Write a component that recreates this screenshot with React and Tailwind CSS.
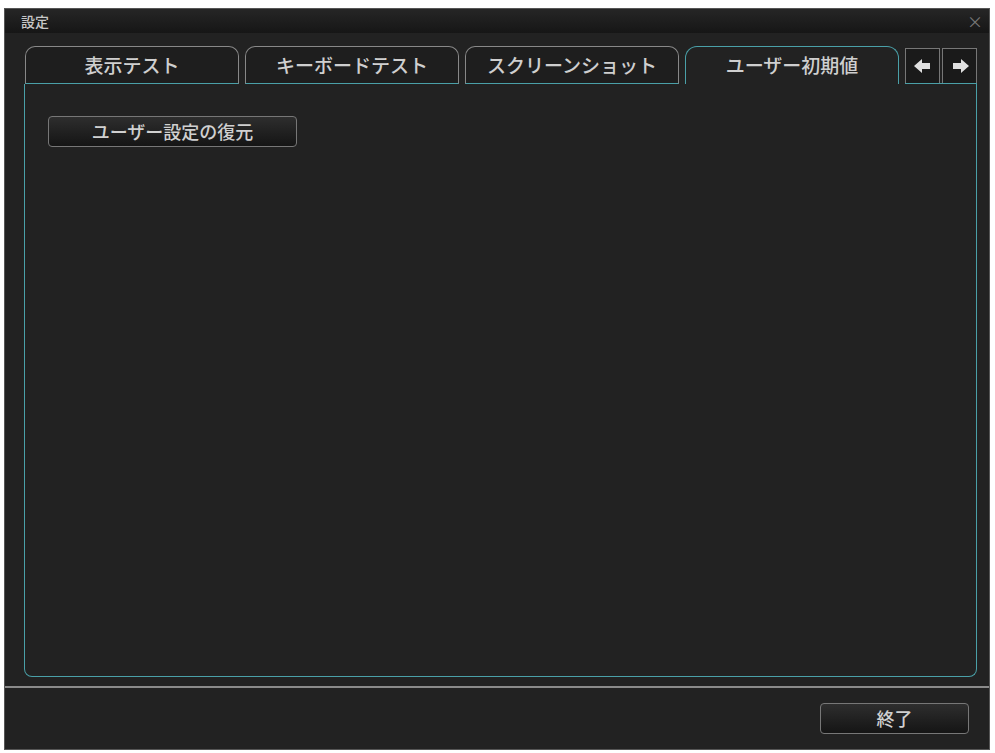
export default function App() {
  const f = { fontFamily: '"Noto Sans CJK JP","Noto Sans",sans-serif' };
  const tabs = ["表示テスト", "キーボードテスト", "スクリーンショット"];
  return (
    <div className="w-[995px] h-[753px] bg-white pt-[8px] px-[4px] pb-[3px]" style={f}>
      <div className="w-[986px] h-[742px] bg-[#222222] border border-[#555] flex flex-col">
        <div className="h-[24px] bg-gradient-to-b from-[#262626] to-[#161616] flex items-center justify-between px-[16px]">
          <span className="text-[14px] text-[#c8c8c8] font-medium">設定</span>
          <span className="text-[16px] text-[#777] mr-[-10px]">×</span>
        </div>
        <div className="flex items-end pl-[20px] mt-[13px] h-[38px]">
          {tabs.map((t) => (
            <div key={t} className="w-[214px] h-[38px] mr-[6px] rounded-t-[10px] border border-[#888] bg-[#1e1e1e] flex items-center justify-center text-[19px] font-medium text-[#cfcfcf] border-b-[#4aa0a8]">
              {t}
            </div>
          ))}
          <div className="w-[214px] h-[38px] rounded-t-[12px] border border-b-0 border-[#4aa0a8] bg-[#222] flex items-center justify-center text-[19px] font-medium text-[#cfcfcf]">
            ユーザー初期値
          </div>
          <div className="flex h-[38px] items-end ml-[6px] gap-[2px] border-b border-[#4aa0a8]">
            {["M9 2 L1 9 L9 16 V12 H17 V6 H9 Z", "M11 2 L19 9 L11 16 V12 H3 V6 H11 Z"].map((d) => (
              <div key={d} className="w-[35px] h-[35px] border-l border-t border-r border-[#777] bg-[#1a1a1a] flex items-center justify-center">
                <svg width="20" height="18" viewBox="0 0 20 18"><path d={d} fill="#e0e0e0" /></svg>
              </div>
            ))}
          </div>
        </div>
        <div className="ml-[19px] mr-[12px] h-[593px] border border-t-0 border-[#4aa0a8] rounded-b-[8px] bg-[#222] pt-[32px] pl-[23px]">
          <div className="w-[249px] h-[31px] rounded-[4px] border border-[#777] bg-gradient-to-b from-[#2e2e2e] to-[#151515] flex items-center justify-center text-[18px] font-medium text-[#d0d0d0]">
            ユーザー設定の復元
          </div>
        </div>
        <div className="mt-[9px] border-t-2 border-[#8a8a8a]" />
        <div className="flex justify-end pr-[20px] pt-[15px]">
          <div className="w-[149px] h-[31px] rounded-[4px] border border-[#777] bg-gradient-to-b from-[#2e2e2e] to-[#151515] flex items-center justify-center text-[18px] font-medium text-[#d0d0d0]">
            終了
          </div>
        </div>
      </div>
    </div>
  );
}
